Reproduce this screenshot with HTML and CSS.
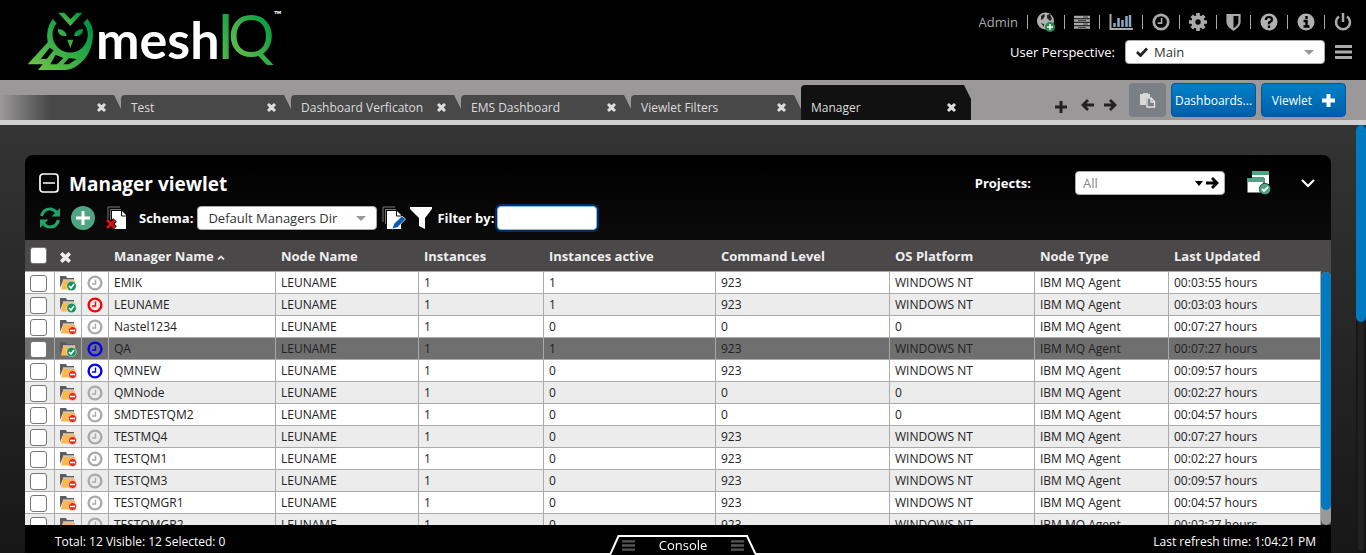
FILE: index.html
```html
<!DOCTYPE html>
<html lang="en">
<head>
<meta charset="utf-8">
<title>meshIQ</title>
<link rel="stylesheet" href="styles.css">
</head>
<body>
<svg class="defs" aria-hidden="true">
  <defs>
    <linearGradient id="leaf" x1="0" y1="1" x2="1" y2="0"><stop offset="0.1" stop-color="#6cc04a"/><stop offset="0.85" stop-color="#009a44"/></linearGradient>
    <symbol id="cross" viewBox="0 0 10 10"><path d="M0 2.2 2.2 0 5 2.4 7.8 0 10 2.2 7.4 5 10 7.8 7.8 10 5 7.6 2.2 10 0 7.8 2.6 5z" fill="currentColor"/></symbol>
    <symbol id="folder" viewBox="0 0 17 16"><path d="M0 13V1h6l1 2h7v3H3z" fill="#5c5c5c"/><path d="M3 5.500H15.500l-2 9H1z" fill="#fdb84c"/><path d="M3 5h12" stroke="#fff"/></symbol>
    <symbol id="on" viewBox="0 0 17 16"><use href="#folder"/><circle cx="11.500" cy="11" r="4.800" fill="#12945c" stroke="#fff" stroke-width=".5"/><path d="m9 11 2 2 3-4" fill="none" stroke="#fff" stroke-width="1.600"/></symbol>
    <symbol id="off" viewBox="0 0 17 16"><use href="#folder"/><circle cx="12.500" cy="11.500" r="4" fill="#dc2a1a" stroke="#fff" stroke-width=".5"/><path d="M10 11.500h5" stroke="#fff" stroke-width="1.600"/></symbol>
    <symbol id="clock" viewBox="0 0 16 16"><circle cx="8" cy="8" r="6.400" fill="none" stroke="currentColor" stroke-width="2.400"/><path d="M8.500 4.500V9H5" fill="none" stroke="currentColor" stroke-width="1.400"/></symbol>
    <symbol id="bars" viewBox="0 0 17 14"><path d="M0 1.500h17M0 7h17M0 12.500h17" stroke="currentColor" stroke-width="3"/></symbol>
    <symbol id="arrow" viewBox="0 0 13 12"><path d="M0 6h11M6 1l5 5-5 5" fill="none" stroke="currentColor" stroke-width="2.800"/></symbol>
    <symbol id="sheets" viewBox="0 0 22 24"><path d="M1 16V1h12M3.500 18V3.500H14" fill="none" stroke="#777"/><path d="M5 5h10l4 4v14H5z" fill="#fff"/><path d="M14.500 5v5H19" fill="none" stroke="#111"/></symbol>
  </defs>
</svg>
<div class="app">
<header class="top">
  <svg class="logo" viewBox="0 0 300 80" role="img" aria-label="meshIQ">
    <g transform="scale(.33333)" fill="url(#leaf)">
      <path d="M175 38h18l18 20 19-20h17l-36 40z"/>
      <path fill-rule="evenodd" d="M158 56 170 70A53 53 0 1 0 250 69L262 56A70 70 0 0 1 279 104Q276 165 235 194Q218 208 195 210H114L128 193H83L143 127Q136 86 158 56ZM149 143 122 177H140L161 151ZM167 164 151 193H171L190 174ZM207 174 190 193H206L230 177Z"/>
      <path d="M173 87Q198 88 200 108Q174 111 173 87ZM249 87Q224 88 222 108Q248 111 249 87ZM202 119h18l-9 25z"/>
    </g>
    <text class="logo-mesh" x="96" y="59">mesh</text>
    <text class="logo-i" x="217" y="59" fill="url(#leaf)">I</text>
    <text class="logo-q" x="228" y="57" fill="url(#leaf)">Q</text>
    <text class="logo-tm" x="274" y="18">™</text>
  </svg>
  <div class="top-right">
    <nav class="icons" aria-label="Account">
      <a class="admin" href="#">Admin</a>
      <button aria-label="Add region"><svg width="18" height="22" viewBox="0 0 18 22"><circle cx="8.500" cy="10" r="8.500" fill="#b0b0b0"/><path d="M4 5 7 3l1 2-2 3-2 1zM10 4l3-1 2 5-2 2-3-3zM4 12l3 1v3z" fill="#222"/><circle cx="13" cy="16" r="5" fill="#258a52"/><path d="M10 16h6M13 13v6" stroke="#fff" stroke-width="1.500"/></svg></button>
      <button aria-label="Servers"><svg width="16" height="14" viewBox="0 0 16 14"><path d="M0 2h16M0 5.500h16M0 9h16M0 12.500h16" stroke="#aaa" stroke-width="2.400"/><path d="M9 2h5M4 5.500h8M9 9h5M4 12.500h8" stroke="#444"/></svg></button>
      <button aria-label="Charts"><svg width="24" height="18" viewBox="0 0 24 18"><path d="M1.500 1v15H24" fill="none" stroke="#aaa" stroke-width="2"/><path d="M5.500 14V10M9.500 14V5M13.500 14V7M17.500 14V3M21 14V2" stroke="#8dabc7" stroke-width="2.500"/></svg></button>
      <button aria-label="Schedule"><svg width="18" height="18"><use href="#clock"/></svg></button>
      <button aria-label="Settings"><svg width="18" height="18" viewBox="0 0 18 18"><circle cx="9" cy="9" r="4.700" fill="none" stroke="#aaa" stroke-width="4"/><path d="M9 0v4M9 14v4M0 9h4M14 9h4M2.700 2.700l3 3M12.300 12.300l3 3M2.700 15.300l3-3M12.300 5.700l3-3" stroke="#aaa" stroke-width="3.600"/></svg></button>
      <button aria-label="Security"><svg width="15" height="18" viewBox="0 0 15 18"><path d="M1.500 2h12v7q0 4-6 7.500-6-3.500-6-7.500z" fill="none" stroke="#aaa" stroke-width="2.200"/><path d="M2 2h5.500v14Q2 13 2 9z" fill="#aaa"/></svg></button>
      <button aria-label="Help"><svg width="18" height="18" viewBox="0 0 18 18"><circle cx="9" cy="9" r="8.500" fill="#b0b0b0"/><path d="M5.800 7q.2-3 3.200-3t3 2.700q0 1.600-3 2.800v1.700M9 12.500V15" fill="none" stroke="#000" stroke-width="2.200"/></svg></button>
      <button aria-label="Information"><svg width="18" height="18" viewBox="0 0 18 18"><circle cx="9" cy="9" r="8.500" fill="#b0b0b0"/><path d="M9.500 3v3M6.500 8h3v6M6.500 13.500h6" fill="none" stroke="#000" stroke-width="2.400"/></svg></button>
      <button aria-label="Log out"><svg width="18" height="18" viewBox="0 0 18 18"><path d="M5 3.500a7 7 0 1 0 8 0M9 0v9" fill="none" stroke="#aaa" stroke-width="2.500"/></svg></button>
    </nav>
    <div class="perspective">
      <label for="persp">User Perspective:</label>
      <span class="combo persp-combo"><svg width="12" height="10" viewBox="0 0 12 10"><path d="m1 5 3.500 3.500L11 1.500" fill="none" stroke="#222" stroke-width="2.800"/></svg><select id="persp"><option>Main</option></select><i class="caret"></i></span>
      <button class="menu" aria-label="Menu"><svg width="17" height="14"><use href="#bars"/></svg></button>
    </div>
  </div>
</header>
<div class="tabbar">
  <div class="tabs">
    <div class="tab first"><a href="#" aria-label="Previous dashboard"></a><button aria-label="Close"><svg><use href="#cross"/></svg></button></div>
    <div class="tab"><a href="#">Test</a><button aria-label="Close"><svg><use href="#cross"/></svg></button></div>
    <div class="tab"><a href="#">Dashboard Verficaton</a><button aria-label="Close"><svg><use href="#cross"/></svg></button></div>
    <div class="tab"><a href="#">EMS Dashboard</a><button aria-label="Close"><svg><use href="#cross"/></svg></button></div>
    <div class="tab"><a href="#">Viewlet Filters</a><button aria-label="Close"><svg><use href="#cross"/></svg></button></div>
    <div class="tab active"><a href="#">Manager</a><button aria-label="Close"><svg><use href="#cross"/></svg></button></div>
  </div>
  <div class="tab-tools">
    <button class="plus" aria-label="New tab"><svg width="12" height="12" viewBox="0 0 12 12"><path d="M0 6h12M6 0v12" stroke="#222" stroke-width="3"/></svg></button>
    <button aria-label="Previous"><svg class="flip" width="13" height="12"><use href="#arrow"/></svg></button>
    <button aria-label="Next"><svg width="13" height="12"><use href="#arrow"/></svg></button>
  </div>
  <div class="actions">
    <button class="paste" aria-label="Paste"><svg width="16" height="15" viewBox="0 0 16 15"><path d="M0 1h3V0h5v1h2v3L6 5v7H0z" fill="#d8d8d8"/><path d="M7 5h4l3.500 3.500V14H7zM11 5v4h3" fill="#7b8086" stroke="#e3e3e3" stroke-width="1.400"/></svg></button>
    <button class="blue">Dashboards...</button>
    <button class="blue">Viewlet <svg width="13" height="13" viewBox="0 0 13 13"><path d="M0 6.500h13M6.500 0v13" stroke="#fff" stroke-width="4"/></svg></button>
  </div>
</div>
<div class="stage">
<main class="panel">
  <div class="title-row">
    <button aria-label="Collapse"><svg width="20" height="20" viewBox="0 0 20 20"><rect x="1" y="1" width="18" height="18" rx="3" fill="none" stroke="#fff" stroke-width="1.700"/><path d="M4 10h12" stroke="#fff" stroke-width="1.700"/></svg></button>
    <h1>Manager viewlet</h1>
    <label class="projects-label" for="projects">Projects:</label>
    <span class="combo projects"><select id="projects"><option>All</option></select><i class="caret dark"></i><button aria-label="Go"><svg width="13" height="12"><use href="#arrow"/></svg></button></span>
    <button class="windows" aria-label="Apply to windows"><svg width="24" height="24" viewBox="0 0 24 24"><path d="M5 0h17v13H5z" fill="#fff"/><path d="M5 0h17v4H5z" fill="#4ea581"/><path d="M0 7h17v15H0z" fill="#fff" stroke="#000"/><path d="M0 7h17v4H0z" fill="#4ea581"/><circle cx="18" cy="18" r="5.700" fill="#4ea581" stroke="#000" stroke-width=".6"/><path d="m15 18 2 2 4-4" fill="none" stroke="#fff" stroke-width="1.800"/></svg></button>
    <button class="more" aria-label="Expand"><svg width="14" height="9" viewBox="0 0 14 9"><path d="m1 1 6 6 6-6" fill="none" stroke="#fff" stroke-width="2.200"/></svg></button>
  </div>
  <div class="tool-row">
    <button aria-label="Refresh"><svg width="22" height="22" viewBox="0 0 21 22"><path d="M2 9Q4 2 10.500 2q4 0 7 4M19 13q-2 7-8.500 7-4 0-7-4" fill="none" stroke="#20a268" stroke-width="3.200"/><path d="M20.500 1v8.500H12zM.5 21v-8.500H9z" fill="#20a268"/></svg></button>
    <button class="add" aria-label="Add"><svg width="24" height="24" viewBox="0 0 24 24"><circle cx="12" cy="12" r="12" fill="#4ea581"/><path d="M5 12h14M12 5v14" stroke="#fff" stroke-width="3"/></svg></button>
    <button class="del" aria-label="Delete schema"><svg width="22" height="24" viewBox="0 0 22 24"><g transform="translate(1 0)"><use href="#sheets" width="22" height="24"/></g><path d="m1 14 8 8M9 14l-8 8" stroke="#000" stroke-width="5"/><path d="m1 14 8 8M9 14l-8 8" stroke="#d8150a" stroke-width="3"/></svg></button>
    <label for="schema">Schema:</label>
    <span class="combo schema"><select id="schema"><option>Default Managers Dir</option></select><i class="caret"></i></span>
    <button aria-label="Edit schema"><svg width="24" height="24" viewBox="0 0 24 24"><use href="#sheets" width="22" height="24"/><path d="m10 23 2-5.500L20 10l3.500 3-8 8.500z" fill="#0b5bb5" stroke="#fff" stroke-width=".7"/></svg></button>
    <button class="funnel" aria-label="Filter"><svg width="22" height="22" viewBox="0 0 22 22"><path d="M0 0h22v2l-7 9v11l-6-3v-8L0 2z" fill="#fff"/></svg></button>
    <label class="filter-label" for="filter">Filter by:</label>
    <input class="filter" id="filter" type="text">
  </div>
  <div class="grid">
    <div class="grid-view">
    <table>
      <colgroup><col class="w30"><col class="w27"><col class="w27"><col class="w167"><col class="w143"><col class="w125"><col class="w172"><col class="w174"><col class="w145"><col class="w134"><col class="w152"></colgroup>
      <thead><tr><th><input type="checkbox" aria-label="Select all"></th><th><svg class="hx"><use href="#cross"/></svg></th><th></th><th>Manager Name <svg width="8" height="5" viewBox="0 0 8 5"><path d="M1 4.500 4 1.500 7 4.500" fill="none" stroke="#ddd" stroke-width="1.800"/></svg></th><th>Node Name</th><th>Instances</th><th>Instances active</th><th>Command Level</th><th>OS Platform</th><th>Node Type</th><th>Last Updated</th></tr></thead>
      <tbody>
<tr><td><input type="checkbox" aria-label="EMIK"></td><td><svg class="st"><use href="#on"/></svg></td><td><svg class="ck"><use href="#clock"/></svg></td><td>EMIK</td><td>LEUNAME</td><td>1</td><td>1</td><td>923</td><td>WINDOWS NT</td><td>IBM MQ Agent</td><td>00:03:55 hours</td></tr>
<tr><td><input type="checkbox" aria-label="LEUNAME"></td><td><svg class="st"><use href="#on"/></svg></td><td><svg class="ck red"><use href="#clock"/></svg></td><td>LEUNAME</td><td>LEUNAME</td><td>1</td><td>1</td><td>923</td><td>WINDOWS NT</td><td>IBM MQ Agent</td><td>00:03:03 hours</td></tr>
<tr><td><input type="checkbox" aria-label="Nastel1234"></td><td><svg class="st"><use href="#off"/></svg></td><td><svg class="ck"><use href="#clock"/></svg></td><td>Nastel1234</td><td>LEUNAME</td><td>1</td><td>0</td><td>0</td><td>0</td><td>IBM MQ Agent</td><td>00:07:27 hours</td></tr>
<tr class="current"><td><input type="checkbox" aria-label="QA"></td><td><svg class="st"><use href="#on"/></svg></td><td><svg class="ck navy"><use href="#clock"/></svg></td><td>QA</td><td>LEUNAME</td><td>1</td><td>1</td><td>923</td><td>WINDOWS NT</td><td>IBM MQ Agent</td><td>00:07:27 hours</td></tr>
<tr><td><input type="checkbox" aria-label="QMNEW"></td><td><svg class="st"><use href="#off"/></svg></td><td><svg class="ck navy"><use href="#clock"/></svg></td><td>QMNEW</td><td>LEUNAME</td><td>1</td><td>0</td><td>923</td><td>WINDOWS NT</td><td>IBM MQ Agent</td><td>00:09:57 hours</td></tr>
<tr><td><input type="checkbox" aria-label="QMNode"></td><td><svg class="st"><use href="#off"/></svg></td><td><svg class="ck"><use href="#clock"/></svg></td><td>QMNode</td><td>LEUNAME</td><td>1</td><td>0</td><td>0</td><td>0</td><td>IBM MQ Agent</td><td>00:02:27 hours</td></tr>
<tr><td><input type="checkbox" aria-label="SMDTESTQM2"></td><td><svg class="st"><use href="#off"/></svg></td><td><svg class="ck"><use href="#clock"/></svg></td><td>SMDTESTQM2</td><td>LEUNAME</td><td>1</td><td>0</td><td>0</td><td>0</td><td>IBM MQ Agent</td><td>00:04:57 hours</td></tr>
<tr><td><input type="checkbox" aria-label="TESTMQ4"></td><td><svg class="st"><use href="#off"/></svg></td><td><svg class="ck"><use href="#clock"/></svg></td><td>TESTMQ4</td><td>LEUNAME</td><td>1</td><td>0</td><td>923</td><td>WINDOWS NT</td><td>IBM MQ Agent</td><td>00:07:27 hours</td></tr>
<tr><td><input type="checkbox" aria-label="TESTQM1"></td><td><svg class="st"><use href="#off"/></svg></td><td><svg class="ck"><use href="#clock"/></svg></td><td>TESTQM1</td><td>LEUNAME</td><td>1</td><td>0</td><td>923</td><td>WINDOWS NT</td><td>IBM MQ Agent</td><td>00:02:27 hours</td></tr>
<tr><td><input type="checkbox" aria-label="TESTQM3"></td><td><svg class="st"><use href="#off"/></svg></td><td><svg class="ck"><use href="#clock"/></svg></td><td>TESTQM3</td><td>LEUNAME</td><td>1</td><td>0</td><td>923</td><td>WINDOWS NT</td><td>IBM MQ Agent</td><td>00:09:57 hours</td></tr>
<tr><td><input type="checkbox" aria-label="TESTQMGR1"></td><td><svg class="st"><use href="#off"/></svg></td><td><svg class="ck"><use href="#clock"/></svg></td><td>TESTQMGR1</td><td>LEUNAME</td><td>1</td><td>0</td><td>923</td><td>WINDOWS NT</td><td>IBM MQ Agent</td><td>00:04:57 hours</td></tr>
<tr><td><input type="checkbox" aria-label="TESTQMGR2"></td><td><svg class="st"><use href="#off"/></svg></td><td><svg class="ck"><use href="#clock"/></svg></td><td>TESTQMGR2</td><td>LEUNAME</td><td>1</td><td>0</td><td>923</td><td>WINDOWS NT</td><td>IBM MQ Agent</td><td>00:02:27 hours</td></tr>
      </tbody>
    </table>
    </div>
    <div class="rail"><div class="rail-thumb"></div></div>
  </div>
  <footer class="status"><span>Total: 12 Visible: 12 Selected: 0</span><span>Last refresh time: 1:04:21 PM</span></footer>
</main>
<div class="page-rail"><div class="page-thumb"></div></div>
</div>
</div>
<button class="console"><svg class="console-edge" width="148" height="20" viewBox="0 0 148 20"><path d="M1 20 9.500 1H138L147 20" fill="#000" stroke="#fff" stroke-width="2"/></svg><svg class="grip" width="13" height="11"><use href="#bars"/></svg><span>Console</span><svg class="grip" width="13" height="11"><use href="#bars"/></svg></button>
</body>
</html>
```
FILE: styles.css
```css
* { box-sizing: border-box; }
body { margin: 0; height: 100vh; padding-bottom: 2px; overflow: hidden; background: #fff; color: #fff; font-family: "Open Sans", "Noto Sans", sans-serif; font-size: 13px; }
button { border: 0; padding: 0; background: none; color: inherit; font: inherit; display: flex; align-items: center; justify-content: center; flex: none; }
svg { display: block; flex: none; }
a { color: inherit; text-decoration: none; }
select { appearance: none; border: 0; padding: 0; background: transparent; color: #333; font: inherit; outline: 0; flex: 1; min-width: 0; }
.defs { position: absolute; width: 0; height: 0; }
.app { height: 100%; display: flex; flex-direction: column; }

.top { height: 80px; flex: none; background: #000; display: flex; justify-content: space-between; }
.logo { width: 300px; height: 80px; }
.logo-mesh { font: 700 52px Lato, sans-serif; fill: #fff; }
.logo-i { font: 400 62px Lato, sans-serif; }
.logo-q { font: 400 58px Lato, sans-serif; }
.logo-tm { font: 700 10px Lato, sans-serif; fill: #fff; }
.top-right { padding: 10px 14px 0 0; display: flex; flex-direction: column; align-items: flex-end; gap: 6px; }
.icons { display: flex; align-items: center; height: 23px; color: #aaa; }
.icons > * + * { height: 22px; padding-left: 9px; margin-left: 10px; position: relative; }
.icons > * + *::before { content: ""; position: absolute; left: -1px; top: 4px; width: 1px; height: 14px; background: #aaa; }
.admin { font-size: 13px; }
.perspective { display: flex; align-items: center; height: 26px; }
.combo { display: flex; align-items: center; background: #fff; border: 1px solid #aaa; border-radius: 4px; height: 24px; padding: 0 10px; }
.persp-combo { width: 200px; margin: 0 10px; gap: 6px; }
.caret { border: 5px solid transparent; border-top-color: #999; border-bottom: 0; }
.caret.dark { border-width: 5px 4px 0; border-top-color: #000; }
.menu { color: #aaa; }

.tabbar { height: 45px; flex: none; background: #9b9899; border-bottom: 5px solid #d0d0d0; display: flex; }
.tabs { display: flex; align-items: flex-end; }
.tab { width: 170px; height: 25px; padding: 0 15px 0 10px; display: flex; align-items: center; justify-content: space-between; background: #484848; color: #ddd; border-radius: 4px 0 0; clip-path: polygon(0 0, 163px 0, 170px 14px, 170px 100%, 0 100%); font-size: 12px; }
.tab svg { width: 9px; height: 9px; }
.tab.first { width: 121px; clip-path: polygon(0 0, 114px 0, 121px 14px, 121px 100%, 0 100%); background: linear-gradient(to right, #9b9899, #484848 50px); border-radius: 0; }
.tab.active { height: 35px; background: #111; align-items: flex-end; }
.tab.active a { padding-bottom: 4px; }
.tab.active button { padding-bottom: 8px; }
.tab-tools { margin-left: auto; display: flex; align-items: center; gap: 10px; padding: 10px 12px 0 0; color: #222; }
.tab-tools .plus { margin: 4px 4px 0 0; }
.flip { transform: scaleX(-1); }
.actions { display: flex; gap: 5px; padding: 3px 20px 3px 0; }
.actions button { border-radius: 4px; }
.paste { width: 37px; background: #7b8086; }
.blue { width: 85px; border: 1px solid #07529a; background: linear-gradient(#007fc6, #0060aa); font-size: 12px; gap: 10px; }

.stage { flex: 1; min-height: 0; background: linear-gradient(#343434, #171717); display: flex; justify-content: space-between; }
.panel { flex: 1; min-width: 0; margin: 30px 25px 0; border-radius: 8px 8px 0 0; background: linear-gradient(#000, #0b0b0b 85px, #000 86px); display: flex; flex-direction: column; overflow: hidden; }
.title-row { display: flex; align-items: center; height: 30px; margin-top: 13px; padding: 0 16px 0 14px; flex: none; }
h1 { font-size: 19px; line-height: 24px; margin: 0 auto 0 10px; padding-top: 2px; }
.title-row label, .tool-row label { font-weight: 700; }
.projects { width: 150px; margin: 0 22px 0 44px; padding: 0 5px 0 7px; color: #000; gap: 3px; }
.projects select { color: #85888e; }
.windows { margin-right: 30px; }
.tool-row { display: flex; align-items: center; height: 40px; margin-bottom: 2px; padding: 0 14px; flex: none; }
.add { margin: 0 11px 0 10px; }
.del { margin-right: 11px; }
.schema { width: 180px; margin: 0 5px 0 4px; }
.funnel { margin: 0 5px 0 4px; }
.filter { width: 100px; height: 24px; border: 1px solid #80bdff; border-radius: 4px; box-shadow: 0 0 0 2px #082c55; outline: 0; margin-left: 3px; }

.grid { flex: 1; min-height: 0; display: flex; background: #4b4849; }
.grid-view { flex: 1; min-width: 0; overflow: hidden; }
table { width: 100%; table-layout: fixed; border-collapse: separate; border-spacing: 0; color: #222; }
th { height: 32px; padding: 0 5px; text-align: left; color: #eee; background: #4b4849; border-bottom: 1px solid #aaa; white-space: nowrap; }
th svg { display: inline-block; vertical-align: middle; }
.hx { width: 11px; height: 11px; }
td { height: 22px; padding: 1px 5px 0; background: #fff; border: solid #aaa; border-width: 0 1px 1px 0; font-size: 12px; line-height: 20px; white-space: nowrap; overflow: hidden; }
tr:nth-child(even) td { background: #ececec; }
tr.current td { background: #6f6f6f; }
.w30 { width: 30px; } .w27 { width: 27px; } .w167 { width: 167px; } .w143 { width: 143px; } .w125 { width: 125px; } .w172 { width: 172px; } .w174 { width: 174px; } .w145 { width: 145px; } .w134 { width: 134px; } .w152 { width: 152px; }
input[type=checkbox] { appearance: none; display: block; width: 17px; height: 17px; margin: 0; background: #fff; border: 1px solid #767676; border-radius: 3px; }
.st { width: 17px; height: 16px; }
.ck { width: 16px; height: 16px; color: #aaa; }
.red { color: #f00; }
.navy { color: #00f; }
.rail { width: 10px; margin-top: 32px; background: #999; border-radius: 5px; overflow: hidden; }
.rail-thumb { height: 94%; background: #0079c1; border-radius: 5px; }
.status { flex: none; height: 28px; padding: 6px 15px 0 30px; display: flex; justify-content: space-between; align-items: center; font-size: 12px; line-height: 18px; background: #000; }
.page-rail { width: 10px; background: #242424; border-radius: 5px; box-shadow: inset 0 0 4px #000; flex: none; }
.page-thumb { height: 46%; background: #0079c1; border-radius: 5px; }
.console { position: fixed; left: 50%; bottom: 0; margin-left: -74px; width: 148px; height: 20px; gap: 24px; font-size: 13px; line-height: 18px; }
.console-edge { position: absolute; left: 0; top: 0; }
.console > :not(.console-edge) { position: relative; }
.grip { color: #555; }
```
